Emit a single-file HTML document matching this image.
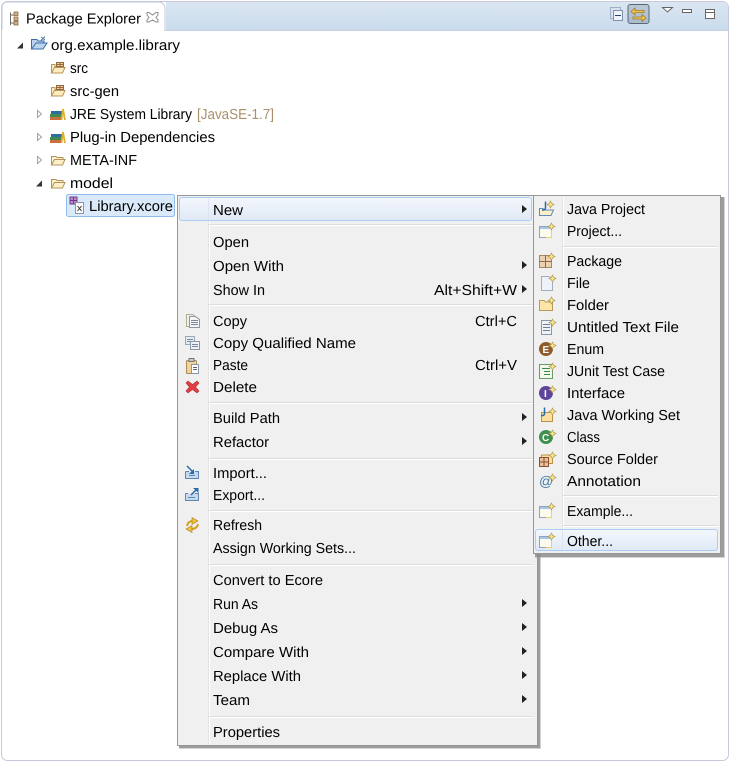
<!DOCTYPE html>
<html><head><meta charset="utf-8"><style>
html,body{margin:0;padding:0;background:#fff;width:730px;height:762px;overflow:hidden}
svg{display:block}
text{font-family:"Liberation Sans",sans-serif;font-size:14.6px;fill:#000;text-rendering:geometricPrecision;transform:translateY(1px)}
</style></head><body>
<svg xmlns="http://www.w3.org/2000/svg" width="730" height="762" viewBox="0 0 730 762">
<defs>
<linearGradient id="bar" x1="0" y1="0" x2="0" y2="1"><stop offset="0" stop-color="#dbe6f2"/><stop offset="1" stop-color="#c9dbec"/></linearGradient>
<linearGradient id="hl" x1="0" y1="0" x2="0" y2="1"><stop offset="0" stop-color="#f4f7fc"/><stop offset="1" stop-color="#dfe9f6"/></linearGradient>
<linearGradient id="btn" x1="0" y1="0" x2="0" y2="1"><stop offset="0" stop-color="#b9c9d9"/><stop offset="1" stop-color="#a9bccf"/></linearGradient>
<symbol id="star" viewBox="0 0 6 6" overflow="visible"><path d="M3 0L4 2L6 3L4 4L3 6L2 4L0 3L2 2Z" fill="#fbe88e" stroke="#b09a50" stroke-width=".6"/></symbol>
<symbol id="folder" viewBox="0 0 16 16" overflow="visible"><path d="M1.500 13V4.500H6L7 5.500H13V7.500H4.500L1.500 13H12.500L15 7.500H4.500" fill="#fdf0c8" stroke="#b0945c"/></symbol>
<symbol id="pkgf" viewBox="0 0 16 16" overflow="visible"><path d="M1.500 13V4.500H5V6.500H13V7.500H4.500L1.500 13H12.500L15 7.500H4.500" fill="#fdecc0" stroke="#b89558"/><path d="M6.500 2.500H13.500V6.500H6.500ZM10 2.500V6.500M6.500 4.500H13.500" fill="#f0cfa0" stroke="#96683e"/></symbol>
<symbol id="lib" viewBox="0 0 16 16" overflow="visible"><rect x="1" y="11" width="12" height="3" fill="#c8703c"/><rect x="1" y="8" width="12" height="3" fill="#3f8a50"/><rect x="2" y="5" width="11" height="3" fill="#2f6d9c"/><path d="M12.500 14L14 3L16 14" fill="none" stroke="#e2b030" stroke-width="1.800"/></symbol>
<symbol id="wiz" viewBox="0 0 20 16" overflow="visible"><path d="M1.500 3.500H13.500V14.500H1.500Z" fill="#fdfbee" stroke="#8fa4c0"/><rect x="2" y="4" width="11" height="2" fill="#a9c6e6"/><path d="M13.500 7V14.500H8" stroke="#ecd060" fill="none"/><use href="#star" x="10" y="0" width="7" height="7"/></symbol>
</defs>

<!-- frame -->
<rect x="0" y="0" width="730" height="762" fill="#fff"/>
<rect x="1.500" y="1.500" width="727" height="759" rx="6" fill="#fff" stroke="#c6c9dd"/>
<path d="M166 2H723Q728 2 728 7V31H166Z" fill="url(#bar)"/>
<path d="M165 30.500H728" stroke="#c6d0e2"/>
<path d="M2 30V8Q2 2 8 2H158Q164 2 165 8V31" fill="#fff" stroke="#c6c9dd"/>

<!-- tab -->
<g fill="none" stroke="#6b6b60"><path d="M10.500 12.500V25M10.500 15H14M10.500 23H14"/></g>
<g fill="#d8b088" stroke="#7a5a38" stroke-width=".7"><rect x="14" y="12" width="4" height="3.500"/><rect x="14" y="17" width="4" height="3.500"/><rect x="14" y="21.500" width="4" height="3.500"/></g>
<text x="26" y="22.500" textLength="115" lengthAdjust="spacingAndGlyphs">Package Explorer</text>
<path d="M149 12.500L152.500 15L156 12.500H158V15L156 17.500L158 20V22H156L152.500 20L149 22H147V20L149 17.500L147 15V12.500Z" fill="#fff" stroke="#8c8c8c"/>

<!-- toolbar -->
<g fill="none">
<rect x="610.500" y="7.500" width="10" height="11" fill="#d7e2ee" stroke="#9fb0c4"/>
<rect x="613.500" y="10.500" width="9" height="10" fill="#eef3f8" stroke="#7f93aa"/>
<path d="M615 15.500H621" stroke="#26486e"/>
<rect x="628" y="4.500" width="21" height="19" rx="2.500" fill="url(#btn)" stroke="#5c6670"/>
<path d="M631 11.500L635 8V10.500H644V12.500H635V15Z" fill="#f0c850" stroke="#a07a20" stroke-width=".8"/>
<path d="M646 18L642 14.500V17H633V19H642V21.500Z" fill="#f0c850" stroke="#a07a20" stroke-width=".8"/>
<path d="M662.500 7.500H672.500L667.500 12Z" fill="#fff" stroke="#666"/>
<rect x="682.500" y="9.500" width="9" height="3" fill="#fff" stroke="#666"/>
<rect x="705.500" y="9.500" width="9" height="9" fill="#fff" stroke="#666"/>
<path d="M705 12.500H715" stroke="#666"/>
</g>

<!-- tree -->
<path d="M17 48.500L23 42.500V48.500Z" fill="#333"/>
<g fill="#fff" stroke="#a0a0a0"><path d="M37.500 110.500L41.500 114L37.500 117.500Z"/><path d="M37.500 133.500L41.500 137L37.500 140.500Z"/><path d="M37.500 156.500L41.500 160L37.500 163.500Z"/></g>
<path d="M36 186.500L42 180.500V186.500Z" fill="#333"/>

<path d="M31.500 48.500V39.500H37L38 41H44V43H36L31.500 49H43L47 43H36" fill="#bcd4ee" stroke="#3c6ea5"/>
<path d="M41 37L45 40M45 36.500L41 40.500" stroke="#4a78a8"/>
<text x="51" y="49" textLength="129" lengthAdjust="spacingAndGlyphs">org.example.library</text>

<use href="#pkgf" x="50" y="60" width="16" height="16"/>
<text x="70" y="72" textLength="18" lengthAdjust="spacingAndGlyphs">src</text>
<use href="#pkgf" x="50" y="83" width="16" height="16"/>
<text x="70" y="95" textLength="49" lengthAdjust="spacingAndGlyphs">src-gen</text>
<use href="#lib" x="49" y="106" width="16" height="16"/>
<text x="70" y="118" textLength="122" lengthAdjust="spacingAndGlyphs">JRE System Library</text>
<text x="197" y="118" textLength="77" lengthAdjust="spacingAndGlyphs" style="fill:#a8906a">[JavaSE-1.7]</text>
<use href="#lib" x="49" y="129" width="16" height="16"/>
<text x="70" y="141" textLength="145" lengthAdjust="spacingAndGlyphs">Plug-in Dependencies</text>
<use href="#folder" x="50" y="152" width="16" height="16"/>
<text x="70" y="164" textLength="67" lengthAdjust="spacingAndGlyphs">META-INF</text>
<use href="#folder" x="50" y="175" width="16" height="16"/>
<text x="70" y="187" textLength="43" lengthAdjust="spacingAndGlyphs">model</text>

<rect x="66.500" y="194.500" width="108" height="22" rx="2" fill="#dbeafa" stroke="#8fbcec"/>
<path d="M70 197H77V204H70ZM73.500 197V204M70 200.500H77" fill="#b88fc8" stroke="#6c3a8c"/>
<path d="M75.500 202.500H83.500V213.500H75.500Z" fill="#fff" stroke="#8a96a8"/>
<path d="M77.500 206L81.500 211M81.500 206L77.500 211" stroke="#333"/>
<text x="89" y="210" textLength="84" lengthAdjust="spacingAndGlyphs">Library.xcore</text>

<!-- main menu -->
<rect x="179" y="197" width="362" height="552" fill="#a0a0a0" opacity=".45"/>
<rect x="179" y="197" width="361" height="551" fill="#8a8a8a" opacity=".75"/>
<rect x="177.500" y="195.500" width="360" height="550" fill="#f0f0f0" stroke="#979797"/>
<path d="M208.500 197V744" stroke="#e3e3e3"/>
<path d="M209.500 197V744" stroke="#fff"/>
<rect x="179.500" y="197.500" width="352" height="23" rx="2.500" fill="url(#hl)" stroke="#a9cdf4"/>
<path d="M208.500 198.500V219.500" stroke="#dbe4f0"/>

<g stroke="#dcdcdc"><path d="M209 224.500H533M209 304.500H533M209 402.500H533M209 458.500H533M209 510.500H533M209 564.500H533M209 716.500H533"/></g>
<g stroke="#fff"><path d="M209 225.500H533M209 305.500H533M209 403.500H533M209 459.500H533M209 511.500H533M209 565.500H533M209 717.500H533"/></g>

<text x="213" y="214" textLength="30" lengthAdjust="spacingAndGlyphs">New</text>
<text x="213" y="246" textLength="36" lengthAdjust="spacingAndGlyphs">Open</text>
<text x="213" y="270" textLength="71" lengthAdjust="spacingAndGlyphs">Open With</text>
<text x="213" y="294" textLength="52" lengthAdjust="spacingAndGlyphs">Show In</text>
<text x="434" y="294" textLength="83" lengthAdjust="spacingAndGlyphs">Alt+Shift+W</text>
<text x="213" y="325" textLength="34" lengthAdjust="spacingAndGlyphs">Copy</text>
<text x="475" y="325" textLength="42" lengthAdjust="spacingAndGlyphs">Ctrl+C</text>
<text x="213" y="347" textLength="143" lengthAdjust="spacingAndGlyphs">Copy Qualified Name</text>
<text x="213" y="369" textLength="35" lengthAdjust="spacingAndGlyphs">Paste</text>
<text x="475" y="369" textLength="42" lengthAdjust="spacingAndGlyphs">Ctrl+V</text>
<text x="213" y="391" textLength="44" lengthAdjust="spacingAndGlyphs">Delete</text>
<text x="213" y="422" textLength="67" lengthAdjust="spacingAndGlyphs">Build Path</text>
<text x="213" y="446" textLength="56" lengthAdjust="spacingAndGlyphs">Refactor</text>
<text x="213" y="477" textLength="54" lengthAdjust="spacingAndGlyphs">Import...</text>
<text x="213" y="499" textLength="52" lengthAdjust="spacingAndGlyphs">Export...</text>
<text x="213" y="529" textLength="49" lengthAdjust="spacingAndGlyphs">Refresh</text>
<text x="213" y="552" textLength="143" lengthAdjust="spacingAndGlyphs">Assign Working Sets...</text>
<text x="213" y="584" textLength="110" lengthAdjust="spacingAndGlyphs">Convert to Ecore</text>
<text x="213" y="608" textLength="45" lengthAdjust="spacingAndGlyphs">Run As</text>
<text x="213" y="632" textLength="65" lengthAdjust="spacingAndGlyphs">Debug As</text>
<text x="213" y="656" textLength="96" lengthAdjust="spacingAndGlyphs">Compare With</text>
<text x="213" y="680" textLength="88" lengthAdjust="spacingAndGlyphs">Replace With</text>
<text x="213" y="704" textLength="37" lengthAdjust="spacingAndGlyphs">Team</text>
<text x="213" y="736" textLength="67" lengthAdjust="spacingAndGlyphs">Properties</text>

<!-- arrows -->
<g fill="#222">
<path d="M522 205L527 209L522 213Z"/>
<path d="M522 261L527 265L522 269Z"/>
<path d="M522 285L527 289L522 293Z"/>
<path d="M522 413L527 417L522 421Z"/>
<path d="M522 437L527 441L522 445Z"/>
<path d="M522 599L527 603L522 607Z"/>
<path d="M522 623L527 627L522 631Z"/>
<path d="M522 647L527 651L522 655Z"/>
<path d="M522 671L527 675L522 679Z"/>
<path d="M522 695L527 699L522 703Z"/>
</g>

<!-- main menu icons -->
<path d="M186.500 314.500H193L196.500 318V326.500H186.500Z" fill="#eef0ec" stroke="#b0ad90"/>
<path d="M189.500 316.500H195.500L199.500 319.500V327.500H189.500Z" fill="#f3f4f4" stroke="#8d97a4"/>
<path d="M191 320.500H198M191 322.500H198M191 324.500H198" stroke="#7a8898"/>
<path d="M185.500 336.500H194.500V344.500H185.500Z" fill="#e4ecf2" stroke="#9aa8b6"/>
<path d="M190.500 341.500H199.500V349.500H190.500Z" fill="#eef2f6" stroke="#8896a6"/>
<path d="M187 339.500H193M187 341.500H190M192 344.500H198M192 346.500H198" stroke="#7a8898"/>
<rect x="186.500" y="360.500" width="10" height="13" rx="1" fill="#efd4a0" stroke="#a88a55"/>
<rect x="189" y="358.500" width="5" height="3" fill="#c8c8c8" stroke="#777"/>
<path d="M191.500 364.500H198.500V373.500H191.500Z" fill="#fff" stroke="#8896a6"/>
<path d="M193 367.500H197M193 369.500H197" stroke="#667"/>
<path d="M188 381L192.500 384.500L197 381L199 383L195.500 387L199 391L197 393L192.500 389.500L188 393L186 391L189.500 387L186 383Z" fill="#e23c45" stroke="#b03038" stroke-width=".6"/>
<path d="M185.500 471.500V478.500H198.500V471.500H195M185.500 471.500H189" fill="#c8d9ec" stroke="#5c86b4"/>
<path d="M189 475.500H195" stroke="#5c86b4"/>
<path d="M187 466L193 472" stroke="#2a6aa8" stroke-width="1.500"/>
<path d="M194 469V474H189Z" fill="#2a6aa8"/>
<path d="M185.500 493.500V500.500H198.500V493.500H195M185.500 493.500H188" fill="#c8d9ec" stroke="#5c86b4"/>
<path d="M188 497.500H195" stroke="#5c86b4"/>
<path d="M191 495L197 489" stroke="#2a6aa8" stroke-width="1.500"/>
<path d="M193 488H198.500V493Z" fill="#2a6aa8"/>
<path d="M187 526Q188 521 193 521" fill="none" stroke="#d8a020" stroke-width="2"/>
<path d="M192 517.500L198 521L192 524.500Z" fill="#efc040" stroke="#a87a18" stroke-width=".6"/>
<path d="M198 524Q197 529 191 529" fill="none" stroke="#d8a020" stroke-width="2"/>
<path d="M192 525.500L186 529L192 532.500Z" fill="#efc040" stroke="#a87a18" stroke-width=".6"/>

<!-- submenu -->
<rect x="535" y="197" width="190" height="361" fill="#a0a0a0" opacity=".45"/>
<rect x="535" y="197" width="189" height="360" fill="#8a8a8a" opacity=".75"/>
<rect x="533.500" y="195.500" width="187" height="358" fill="#f0f0f0" stroke="#979797"/>
<path d="M562.500 197V552" stroke="#e3e3e3"/>
<path d="M563.500 197V552" stroke="#fff"/>
<g stroke="#dcdcdc"><path d="M563 246.500H718M563 495.500H718M563 525.500H718"/></g>
<g stroke="#fff"><path d="M563 247.500H718M563 496.500H718M563 526.500H718"/></g>
<rect x="535.500" y="529.500" width="182" height="21" rx="2.500" fill="url(#hl)" stroke="#a9cdf4"/>
<path d="M562.500 530.500V549.500" stroke="#dbe4f0"/>

<text x="567" y="213" textLength="78" lengthAdjust="spacingAndGlyphs">Java Project</text>
<text x="567" y="235" textLength="55" lengthAdjust="spacingAndGlyphs">Project...</text>
<text x="567" y="265" textLength="55" lengthAdjust="spacingAndGlyphs">Package</text>
<text x="567" y="287" textLength="23" lengthAdjust="spacingAndGlyphs">File</text>
<text x="567" y="309" textLength="42" lengthAdjust="spacingAndGlyphs">Folder</text>
<text x="567" y="331" textLength="112" lengthAdjust="spacingAndGlyphs">Untitled Text File</text>
<text x="567" y="353" textLength="37" lengthAdjust="spacingAndGlyphs">Enum</text>
<text x="567" y="375" textLength="98" lengthAdjust="spacingAndGlyphs">JUnit Test Case</text>
<text x="567" y="397" textLength="58" lengthAdjust="spacingAndGlyphs">Interface</text>
<text x="567" y="419" textLength="113" lengthAdjust="spacingAndGlyphs">Java Working Set</text>
<text x="567" y="441" textLength="33" lengthAdjust="spacingAndGlyphs">Class</text>
<text x="567" y="463" textLength="91" lengthAdjust="spacingAndGlyphs">Source Folder</text>
<text x="567" y="485" textLength="74" lengthAdjust="spacingAndGlyphs">Annotation</text>
<text x="567" y="515" textLength="66" lengthAdjust="spacingAndGlyphs">Example...</text>
<text x="567" y="545" textLength="46" lengthAdjust="spacingAndGlyphs">Other...</text>

<!-- submenu icons -->
<path d="M539.500 215.500V208.500H543L544 210H553.500L551 215.500Z" fill="#fdf0c8" stroke="#5f8ab8"/>
<path d="M545.500 201.500V208Q545 210.500 542 210" fill="none" stroke="#2a6aa8" stroke-width="1.500"/>
<use href="#star" x="547" y="201" width="7" height="7"/>
<use href="#wiz" x="538" y="223" width="20" height="16"/>
<path d="M539.500 255.500H551.500V267.500H539.500Z" fill="#ecd2b0" stroke="#a88860"/>
<path d="M545.500 255V268M539 261.500H552" stroke="#96684a"/>
<use href="#star" x="548" y="253" width="7" height="7"/>
<path d="M541.500 276.500H549L552.500 279V290.500H541.500Z" fill="#eef3fa" stroke="#a0aec0"/>
<use href="#star" x="549" y="275" width="7" height="7"/>
<path d="M539.500 310.500V300.500H544L545.500 302H552.500V310.500Z" fill="#fde6a8" stroke="#b89a58"/>
<use href="#star" x="548" y="297" width="7" height="7"/>
<path d="M541.500 320.500H551.500V334.500H541.500Z" fill="#eef3fa" stroke="#8896a8"/>
<path d="M543 324.500H550M543 327.500H550M543 330.500H550" stroke="#708090"/>
<use href="#star" x="549" y="319" width="7" height="7"/>
<circle cx="546" cy="349" r="7" fill="#8f5a2a"/>
<text x="542.500" y="352" style="font-size:10px;font-weight:bold;fill:#fff">E</text>
<use href="#star" x="549" y="342" width="7" height="7"/>
<path d="M539.500 364.500H552.500V378.500H539.500Z" fill="#f2f8ec" stroke="#6a9a6a"/>
<path d="M542 368.500H550M544 371.500H550M544 374.500H550" stroke="#3a8a4a"/>
<use href="#star" x="549" y="363" width="7" height="7"/>
<circle cx="546" cy="393" r="7" fill="#5f449c"/>
<text x="544" y="396" style="font-size:10px;font-weight:bold;fill:#fff">I</text>
<use href="#star" x="549" y="386" width="7" height="7"/>
<path d="M541.500 421.500V412.500H552.500V421.500Z" fill="#fde0a0" stroke="#b8924a"/>
<path d="M544.500 407.500V414Q544 416 541 415.500" fill="none" stroke="#2a6aa8" stroke-width="1.500"/>
<use href="#star" x="549" y="408" width="7" height="7"/>
<circle cx="546" cy="437" r="7" fill="#3f8f4f"/>
<text x="542" y="440" style="font-size:10px;font-weight:bold;fill:#fff">C</text>
<use href="#star" x="549" y="430" width="7" height="7"/>
<path d="M541.500 463.500V455H552.500V463.500Z" fill="#fde0a0" stroke="#b8924a"/>
<path d="M539.500 457.500H548.500V466.500H539.500ZM544 457.500V466.500M539.500 462H548.500" fill="#ecc09a" stroke="#8a5030"/>
<use href="#star" x="549" y="452" width="7" height="7"/>
<text x="539" y="485" style="font-size:14px;fill:#4a7fa8">@</text>
<use href="#star" x="549" y="474" width="7" height="7"/>
<use href="#wiz" x="538" y="503" width="20" height="16"/>
<use href="#wiz" x="538" y="533" width="20" height="16"/>
</svg>
</body></html>
